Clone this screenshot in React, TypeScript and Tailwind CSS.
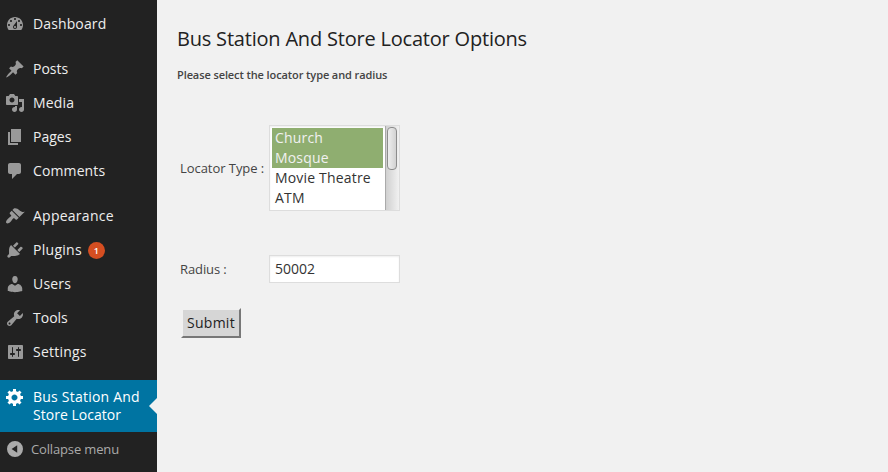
import React from 'react';

const icons = {
  dashboard:
    'M3.76 16h12.48c1.1-1.37 1.76-3.11 1.76-5 0-4.42-3.58-8-8-8s-8 3.58-8 8c0 1.89.66 3.63 1.76 5zM10 4c.55 0 1 .45 1 1s-.45 1-1 1-1-.45-1-1 .45-1 1-1zM6 6c.55 0 1 .45 1 1s-.45 1-1 1-1-.45-1-1 .45-1 1-1zm8 0c.55 0 1 .45 1 1s-.45 1-1 1-1-.45-1-1 .45-1 1-1zm-5.37 5.55L12 7v6c0 1.1-.9 2-2 2s-2-.9-2-2c0-.57.24-1.08.63-1.45zM4 10c.55 0 1 .45 1 1s-.45 1-1 1-1-.45-1-1 .45-1 1-1zm12 0c.55 0 1 .45 1 1s-.45 1-1 1-1-.45-1-1 .45-1 1-1zm-5 3c0-.55-.45-1-1-1s-1 .45-1 1 .45 1 1 1 1-.45 1-1z',
  post: 'M10.44 3.02l1.82-1.82 6.36 6.35-1.83 1.82c-1.05-.68-2.48-.57-3.41.36l-.75.75c-.92.93-1.04 2.35-.35 3.41l-1.83 1.82-2.41-2.41-2.8 2.79c-.42.42-3.38 2.71-3.8 2.29s1.86-3.39 2.28-3.81l2.79-2.79L4.1 9.36l1.83-1.82c1.05.69 2.48.57 3.4-.36l.75-.75c.93-.92 1.05-2.35.36-3.41z',
  media:
    'M13 11V4c0-.55-.45-1-1-1h-1.67L9 1H5L3.67 3H2c-.55 0-1 .45-1 1v7c0 .55.45 1 1 1h10c.55 0 1-.45 1-1zM7 4.5c1.38 0 2.5 1.12 2.5 2.5S8.38 9.5 7 9.5 4.5 8.38 4.5 7 5.62 4.5 7 4.5zM14 6h5v10.5c0 1.38-1.12 2.5-2.5 2.5S14 17.88 14 16.5s1.12-2.5 2.5-2.5c.17 0 .34.02.5.05V9h-3V6zm-4 8.05V13h2v3.5c0 1.38-1.12 2.5-2.5 2.5S7 17.88 7 16.5 8.12 14 9.5 14c.17 0 .34.02.5.05z',
  page: 'M6 15V2h10v13H6zm-1 1h8v2H3V5h2v11z',
  comments: 'M5 2h9c1.1 0 2 .9 2 2v7c0 1.1-.9 2-2 2h-2l-5 5v-5H5c-1.1 0-2-.9-2-2V4c0-1.1.9-2 2-2z',
  appearance:
    'M14.48 11.06L7.41 3.99l1.5-1.5c.5-.56 2.3-.47 3.51.32 1.21.8 1.43 1.28 2.91 2.1 1.18.64 2.45 1.26 4.45.85zm-.71.71L6.7 4.7 4.93 6.47c-.39.39-.39 1.02 0 1.41l1.06 1.06c.39.39.39 1.03 0 1.42-.6.6-1.43 1.11-2.21 1.69-.35.26-.7.53-1.01.84C1.43 14.23.4 16.08 1.4 17.07c.99 1 2.84-.03 4.18-1.36.31-.31.58-.66.85-1.02.57-.78 1.08-1.61 1.69-2.21.39-.39 1.02-.39 1.41 0l1.06 1.06c.39.39 1.02.39 1.41 0z',
  plugins:
    'M13.11 4.36L9.87 7.6 8 5.73l3.24-3.24c.35-.34 1.05-.2 1.56.32.52.51.66 1.21.31 1.55zm-8 1.77l.91-1.12 9.01 9.01-1.19.84c-.71.71-2.63 1.16-3.82 1.16H6.14L4.9 17.26c-.59.59-1.54.59-2.12 0-.59-.58-.59-1.53 0-2.12l1.24-1.24v-3.88c0-1.13.4-3.19 1.09-3.89zm7.26 3.97l3.24-3.24c.34-.35 1.04-.21 1.55.31.52.51.66 1.21.31 1.55l-3.24 3.25z',
  users:
    'M10 9.25c-2.27 0-2.73-3.44-2.73-3.44C7 4.02 7.82 2 9.97 2c2.16 0 2.98 2.02 2.71 3.81 0 0-.41 3.44-2.68 3.44zm0 2.57L12.72 10c2.39 0 4.52 2.33 4.52 4.53v2.49s-3.65 1.13-7.24 1.13c-3.65 0-7.24-1.13-7.24-1.13v-2.49c0-2.25 1.94-4.48 4.47-4.48z',
  tools:
    'M16.68 9.77c-1.34 1.34-3.3 1.67-4.95.99l-5.41 6.52c-.99.99-2.59.99-3.58 0s-.99-2.59 0-3.57l6.52-5.42c-.68-1.65-.35-3.61.99-4.95 1.28-1.28 3.12-1.62 4.72-1.06l-2.89 2.89 2.82 2.82 2.86-2.87c.53 1.58.18 3.39-1.08 4.65zM3.81 16.21c.4.39 1.04.39 1.43 0 .4-.4.4-1.04 0-1.43-.39-.4-1.03-.4-1.43 0-.39.39-.39 1.03 0 1.43z',
  settings:
    'M18 16V4c0-.55-.45-1-1-1H4c-.55 0-1 .45-1 1v12c0 .55.45 1 1 1h13c.55 0 1-.45 1-1zM8 11h1c.55 0 1 .45 1 1s-.45 1-1 1H8v1.5c0 .28-.22.5-.5.5s-.5-.22-.5-.5V13H6c-.55 0-1-.45-1-1s.45-1 1-1h1V5.5c0-.28.22-.5.5-.5s.5.22.5.5V11zm5-2h-1c-.55 0-1-.45-1-1s.45-1 1-1h1V5.5c0-.28.22-.5.5-.5s.5.22.5.5V7h1c.55 0 1 .45 1 1s-.45 1-1 1h-1v5.5c0 .28-.22.5-.5.5s-.5-.22-.5-.5V9z',
  gear: 'M18 12h-2.18c-.17.7-.44 1.35-.81 1.93l1.54 1.54-2.1 2.1-1.54-1.54c-.58.36-1.23.63-1.91.79V19H8v-2.18c-.68-.16-1.33-.43-1.91-.79l-1.54 1.54-2.12-2.12 1.54-1.54c-.36-.58-.63-1.23-.79-1.91H1V9.03h2.17c.16-.7.44-1.35.8-1.94L2.43 5.55l2.1-2.1 1.54 1.54c.58-.37 1.24-.64 1.93-.81V2h3v2.18c.68.16 1.33.43 1.91.79l1.54-1.54 2.12 2.12-1.54 1.54c.36.59.64 1.24.8 1.94H18V12zm-8.5 1.5c1.66 0 3-1.34 3-3s-1.34-3-3-3-3 1.34-3 3 1.34 3 3 3z',
  collapse: 'M10 2a8 8 0 1 0 0 16a8 8 0 0 0 0-16zM12.2 6.2v7.6L6.6 10z',
};

type IconName = keyof typeof icons;

function Icon({ name }: { name: IconName }) {
  return (
    <svg viewBox="0 0 20 20" className="size-5 shrink-0 fill-current">
      <path fillRule="evenodd" d={icons[name]} />
    </svg>
  );
}

interface MenuItemProps {
  icon: IconName;
  label: string;
  badge?: string;
  tracking?: string;
}

function MenuItem({ icon, label, badge, tracking = 'tracking-[0.12px]' }: MenuItemProps) {
  return (
    <a className="flex h-[34px] items-center pl-[5px] text-[#999]">
      <Icon name={icon} />
      <span className={`ml-2 text-sm leading-[18px] text-[#eee] ${tracking}`}>{label}</span>
      {badge && (
        <span className="mt-px ml-[6px] flex size-[17px] items-center justify-center rounded-full bg-[#d54e21] text-[9px] leading-[17px] font-semibold text-white">
          {badge}
        </span>
      )}
    </a>
  );
}

const options = [
  { label: 'Church', selected: true },
  { label: 'Mosque', selected: true },
  { label: 'Movie Theatre', selected: false },
  { label: 'ATM', selected: false },
];

export default function App() {
  return (
    <div className="flex h-[472px] w-[888px] overflow-hidden bg-[#f1f1f1] font-['Open_Sans',sans-serif] text-[13px] text-[#444]">
      <nav className="w-[157px] shrink-0 bg-[#222] pt-[7px]">
        <MenuItem icon="dashboard" label="Dashboard" />
        <div className="h-[11px]" />
        <MenuItem icon="post" label="Posts" tracking="tracking-normal" />
        <MenuItem icon="media" label="Media" tracking="tracking-[0.2px]" />
        <MenuItem icon="page" label="Pages" tracking="tracking-normal" />
        <MenuItem icon="comments" label="Comments" />
        <div className="h-[11px]" />
        <MenuItem icon="appearance" label="Appearance" tracking="tracking-[0.25px]" />
        <MenuItem icon="plugins" label="Plugins" badge="1" tracking="tracking-[0.28px]" />
        <MenuItem icon="users" label="Users" tracking="tracking-[0.2px]" />
        <MenuItem icon="tools" label="Tools" tracking="tracking-normal" />
        <MenuItem icon="settings" label="Settings" tracking="tracking-[0.22px]" />
        <div className="h-[11px]" />
        <a className="relative flex h-[52px] bg-[#0074a2] pt-[7px] pl-[5px] text-white">
          <Icon name="gear" />
          <span className="mt-px ml-2 text-sm leading-[18px]">
            <span className="tracking-[0.22px]">Bus Station And</span>
            <br />
            <span className="tracking-[0.03px]">Store Locator</span>
          </span>
          <span className="absolute top-[18px] right-0 border-y-8 border-r-8 border-y-transparent border-r-[#f1f1f1]" />
        </a>
        <a className="flex h-[34px] items-center pl-[5px] text-[#aaa]">
          <Icon name="collapse" />
          <span className="ml-[6px] text-[13px] leading-[18px] tracking-[-0.15px]">Collapse menu</span>
        </a>
      </nav>

      <main className="flex flex-col items-start pl-5">
        <h2 className="mt-6 text-[20px] leading-[29px] tracking-[-0.2px] text-[#222]">
          Bus Station And Store Locator Options
        </h2>
        <h5 className="mt-[14px] text-[11px] leading-4 font-semibold tracking-[-0.1px]">
          Please select the locator type and radius
        </h5>

        <div className="mt-[42px] flex h-[86px] items-center pl-[3px]">
          <label className="w-[89px] pt-[2px] tracking-[-0.05px]">Locator Type :</label>
          <div className="flex h-[86px] w-[131px] overflow-hidden border border-[#ddd] bg-white shadow-[inset_0_1px_2px_rgba(0,0,0,0.07)]">
            <ul className="w-[115px] shrink-0 py-[2px] pr-[2px] pl-[2px] text-sm tracking-[0.18px] text-[#333]">
              {options.map((o) => (
                <li
                  key={o.label}
                  className={
                    o.selected
                      ? 'h-5 bg-[#8fae70] pl-[3px] leading-5 text-[#f1f1f1]'
                      : 'h-5 pl-[3px] leading-5'
                  }
                >
                  {o.label}
                </li>
              ))}
            </ul>
            <div className="w-[14px] border-l border-[#aaa] bg-linear-to-r from-[#d0d0d0] to-[#f1f1f1] pt-px pl-px">
              <div className="h-[43px] w-[10px] rounded-[4px] border border-[#8c8c8c] bg-linear-to-r from-[#eee] to-[#d2d2d2]" />
            </div>
          </div>
        </div>

        <div className="mt-11 flex h-7 items-center pl-[3px]">
          <label className="w-[89px] pt-[2px] tracking-[-0.1px]">Radius :</label>
          <input
            defaultValue="50002"
            className="h-7 w-[131px] border border-[#ddd] bg-white px-[5px] pb-[2px] text-sm text-[#333] shadow-[inset_0_1px_2px_rgba(0,0,0,0.07)] outline-none"
          />
        </div>

        <button className="mt-[25px] ml-[4px] h-[30px] w-[60px] border-2 border-t-[#f1f1f1] border-r-[#777] border-b-[#777] border-l-[#f1f1f1] bg-[#d6d6d6] text-sm leading-[26px] tracking-[0.25px] text-[#222]">
          Submit
        </button>
      </main>
    </div>
  );
}
